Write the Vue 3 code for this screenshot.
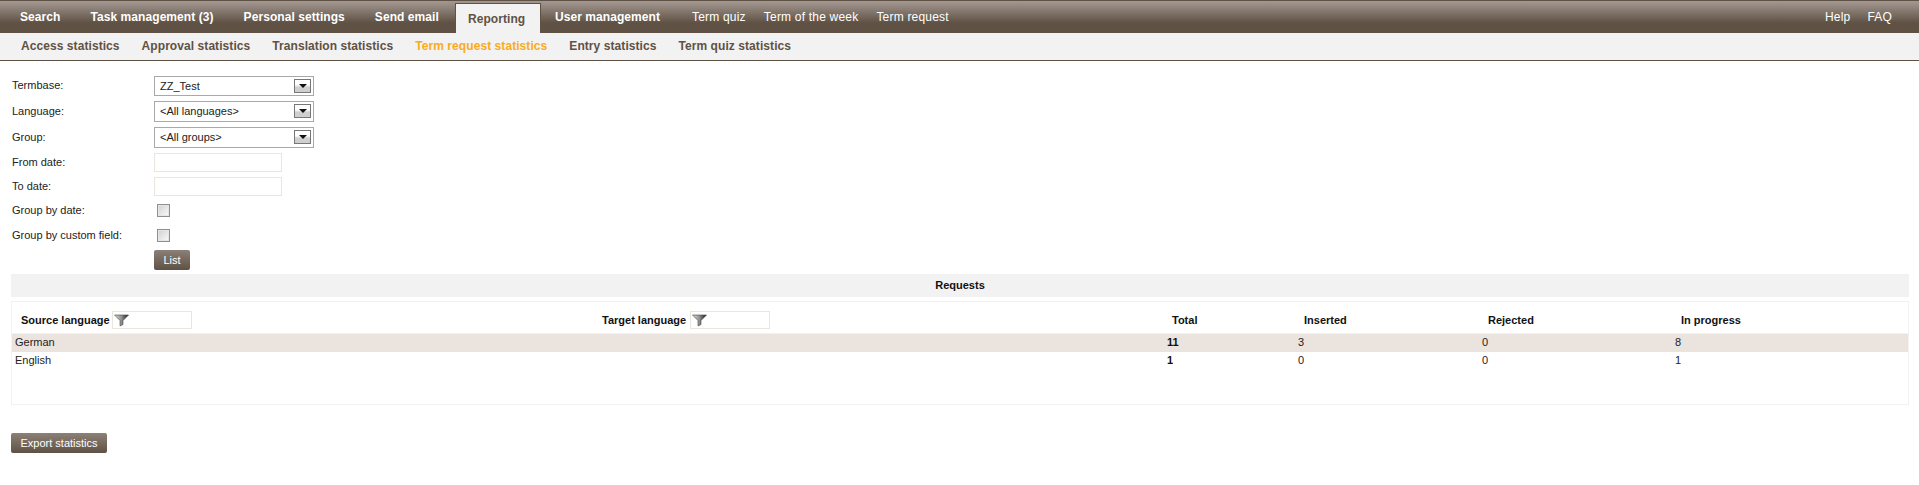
<script setup>
const mainTabs = [
  { label: 'Search' },
  { label: 'Task management (3)' },
  { label: 'Personal settings' },
  { label: 'Send email' },
  { label: 'Reporting', active: true },
  { label: 'User management' }
]
const extraTabs = ['Term quiz', 'Term of the week', 'Term request']
const helpTabs = ['Help', 'FAQ']
const subTabs = [
  { label: 'Access statistics' },
  { label: 'Approval statistics' },
  { label: 'Translation statistics' },
  { label: 'Term request statistics', active: true },
  { label: 'Entry statistics' },
  { label: 'Term quiz statistics' }
]
const selects = [
  { label: 'Termbase:', value: 'ZZ_Test', cls: 'r25' },
  { label: 'Language:', value: '<All languages>', cls: 'r26' },
  { label: 'Group:', value: '<All groups>', cls: 'r26' }
]
const rows = [
  { source: 'German', total: 11, inserted: 3, rejected: 0, progress: 8, shade: true },
  { source: 'English', total: 1, inserted: 0, rejected: 0, progress: 1 }
]
</script>

<template>
  <div class="page">
    <nav class="topbar">
      <a v-for="t in mainTabs" :key="t.label" class="tab" :class="{ active: t.active }">{{ t.label }}</a>
      <div class="extra">
        <a v-for="t in extraTabs" :key="t">{{ t }}</a>
      </div>
      <div class="help">
        <a v-for="t in helpTabs" :key="t">{{ t }}</a>
      </div>
    </nav>
    <nav class="subbar">
      <a v-for="t in subTabs" :key="t.label" :class="{ active: t.active }">{{ t.label }}</a>
    </nav>

    <form class="form" @submit.prevent>
      <div v-for="s in selects" :key="s.label" class="row" :class="s.cls">
        <label>{{ s.label }}</label>
        <div class="select">
          <select>
            <option>{{ s.value }}</option>
          </select>
          <span class="arrow"></span>
        </div>
      </div>
      <div class="row r24">
        <label>From date:</label>
        <input class="text" type="text" />
      </div>
      <div class="row r24">
        <label>To date:</label>
        <input class="text" type="text" />
      </div>
      <div class="row r25">
        <label>Group by date:</label>
        <span class="check"></span>
      </div>
      <div class="row r24">
        <label>Group by custom field:</label>
        <span class="check"></span>
      </div>
      <div class="row">
        <label></label>
        <button class="btn list" type="submit">List</button>
      </div>
    </form>

    <section class="results">
      <h2 class="title">Requests</h2>
      <div class="panel">
        <div class="grid head">
          <div class="filtercell src">
            <span>Source language</span>
            <span class="filter">
              <svg width="15" height="13" viewBox="0 0 15 12">
                <defs>
                  <linearGradient id="fn" x1="0" x2="1" y1="0" y2="0">
                    <stop offset="0" stop-color="#dcdcdc" />
                    <stop offset="0.5" stop-color="#909090" />
                    <stop offset="1" stop-color="#161616" />
                  </linearGradient>
                </defs>
                <path d="M0.5 0.5H14.5L9 6V10L6 11.5V6Z" fill="url(#fn)" stroke="#444" stroke-width="0.6" />
              </svg>
            </span>
          </div>
          <div class="filtercell tgt">
            <span>Target language</span>
            <span class="filter">
              <svg width="15" height="13" viewBox="0 0 15 12">
                <path d="M0.5 0.5H14.5L9 6V10L6 11.5V6Z" fill="url(#fn)" stroke="#444" stroke-width="0.6" />
              </svg>
            </span>
          </div>
          <div class="hc total">Total</div>
          <div class="hc offset">Inserted</div>
          <div class="hc offset">Rejected</div>
          <div class="hc offset">In progress</div>
        </div>
        <div v-for="r in rows" :key="r.source" class="grid body" :class="{ shade: r.shade }">
          <div class="name">{{ r.source }}</div>
          <div></div>
          <div class="num"><b>{{ r.total }}</b></div>
          <div class="num">{{ r.inserted }}</div>
          <div class="num">{{ r.rejected }}</div>
          <div class="num">{{ r.progress }}</div>
        </div>
      </div>
    </section>

    <button class="btn export" type="button">Export statistics</button>
  </div>
</template>

<style>
html, body {
  margin: 0;
  background: #fff;
}
</style>

<style scoped>
.page {
  width: 1919px;
  height: 485px;
  overflow: hidden;
  font-family: "Liberation Sans", Arial, sans-serif;
  font-size: 11px;
  color: #222;
}

.topbar {
  box-sizing: border-box;
  height: 33px;
  display: flex;
  align-items: stretch;
  padding-left: 5px;
  border-top: 1px solid #5f5144;
  background: linear-gradient(#a1968f 1px, #5f5144 22px);
  color: #fff;
  font-size: 12px;
  line-height: 32px;
  letter-spacing: 0.07px;
}
.tab {
  font-weight: bold;
  padding: 0 15px;
}
.tab.active {
  box-sizing: border-box;
  width: 86px;
  height: 30px;
  margin: 2px -1px 0 1px;
  padding: 0 0 0 12px;
  line-height: 30px;
  background: #f2f2f2;
  border: 1px solid #5f5144;
  border-bottom: 0;
  color: #5f5144;
}
.extra {
  display: flex;
  gap: 18px;
  margin-left: 17px;
  letter-spacing: 0.2px;
}
.help {
  display: flex;
  gap: 17px;
  margin-left: auto;
  margin-right: 27px;
  letter-spacing: 0.2px;
}

.subbar {
  box-sizing: border-box;
  height: 28px;
  display: flex;
  gap: 22px;
  padding-left: 21px;
  background: #f2f2f2;
  border-bottom: 1px solid #5f5144;
  font-size: 12px;
  font-weight: bold;
  line-height: 27px;
  letter-spacing: 0.07px;
  color: #5f5144;
}
.subbar .active {
  color: #f9ab1e;
}

.form {
  padding: 15px 0 0 12px;
}
.row {
  display: flex;
  align-items: flex-start;
}
.row label {
  width: 142px;
  flex: none;
  line-height: 18px;
}
.r24 { height: 24px; }
.r25 { height: 25px; }
.r26 { height: 26px; }
.r26 label { line-height: 20px; }

.select {
  position: relative;
  width: 160px;
  height: 21px;
}
.r25 .select { height: 20px; }
.select select {
  box-sizing: border-box;
  width: 100%;
  height: 100%;
  appearance: none;
  margin: 0;
  padding: 0 0 1px 5px;
  border: 1px solid #a9a9a9;
  border-radius: 0;
  background: #fff;
  font: 11px "Liberation Sans", Arial, sans-serif;
  color: #222;
}
.arrow {
  position: absolute;
  top: 3px;
  right: 3px;
  box-sizing: border-box;
  width: 17px;
  height: 14px;
  border: 1px solid #777;
  background: linear-gradient(#fff 40%, #cfcfcf 60%);
}
.arrow::after {
  content: "";
  position: absolute;
  left: 4px;
  top: 4px;
  border: 4px solid transparent;
  border-top: 4px solid #111;
  border-bottom: 0;
}

.text {
  box-sizing: border-box;
  width: 128px;
  height: 19px;
  margin: 0;
  padding: 0 3px;
  border: 1px solid #ebe5dd;
  background: #fff;
}
.check {
  box-sizing: border-box;
  width: 13px;
  height: 13px;
  margin: 3px 0 0 3px;
  border: 1px solid #8f8f8f;
  background: linear-gradient(135deg, #d0d0d0, #fbfbfb);
  box-shadow: inset 0 0 0 1px #e6e6e6;
}

.btn {
  display: block;
  box-sizing: border-box;
  height: 20px;
  margin: 0;
  padding: 0;
  border: 0;
  border-radius: 2px;
  background: linear-gradient(#8c8077, #5f5144);
  color: #fff;
  font: 11px "Liberation Sans", Arial, sans-serif;
}
.list {
  width: 36px;
}
.export {
  width: 96px;
  margin: 28px 0 0 11px;
}

.results {
  margin: 4px 10px 0 11px;
}
.title {
  height: 23px;
  margin: 0;
  background: #f2f2f2;
  font-size: 11px;
  font-weight: bold;
  line-height: 23px;
  text-align: center;
  color: #111;
}
.panel {
  box-sizing: border-box;
  height: 104px;
  margin-top: 4px;
  border: 1px solid #f2f2f2;
}
.grid {
  display: grid;
  grid-template-columns: 578px 577px 131px 184px 193px 1fr;
}
.head {
  height: 31px;
  font-weight: bold;
  color: #111;
  line-height: 36px;
  border-bottom: 1px solid #f2f2f2;
}
.filtercell {
  display: flex;
  align-items: flex-start;
}
.src { padding-left: 9px; }
.src .filter { margin-left: 2px; }
.tgt { padding-left: 12px; }
.filter {
  box-sizing: border-box;
  display: flex;
  align-items: center;
  width: 80px;
  height: 18px;
  margin: 9px 0 0 4px;
  padding-left: 1px;
  border: 1px solid #ebe5dd;
  background: #fff;
}
.hc { white-space: nowrap; }
.total { padding-left: 5px; }
.offset { padding-left: 6px; }
.body {
  height: 18px;
  line-height: 17px;
}
.shade {
  background: #ebe3dd;
}
.name {
  padding-left: 3px;
}
.num b {
  color: #111;
}
</style>
